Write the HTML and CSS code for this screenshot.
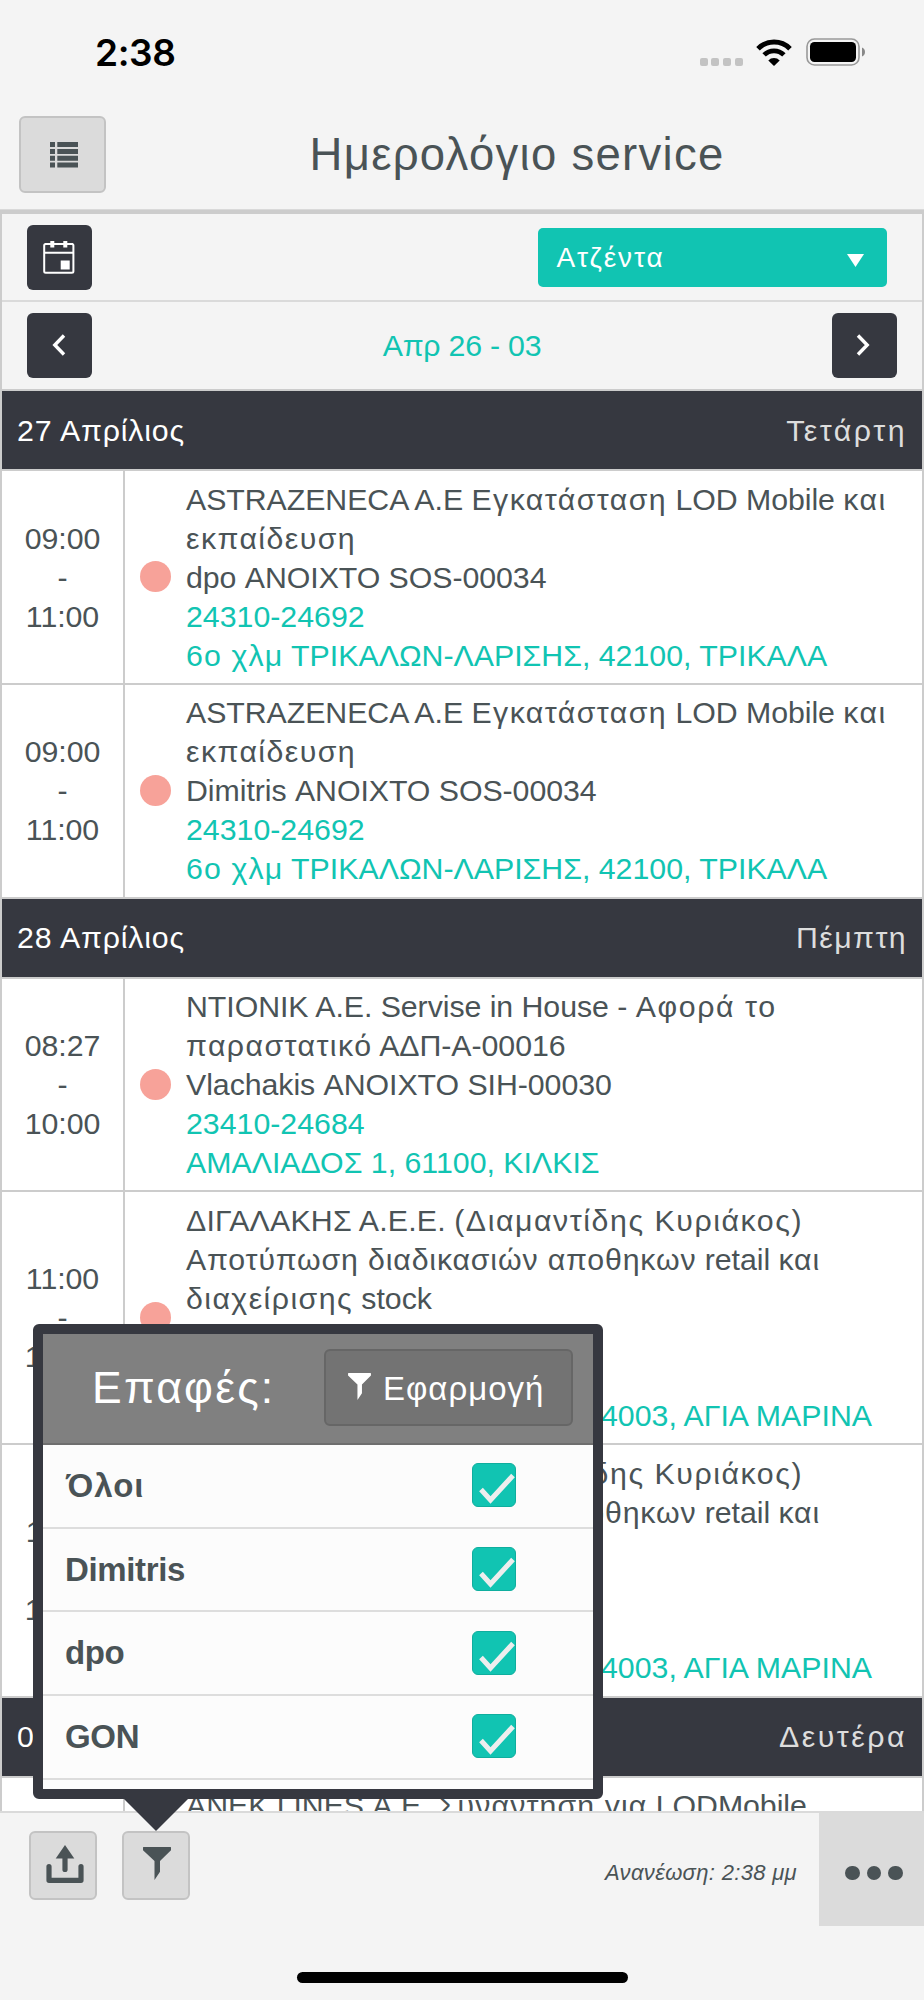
FILE: index.html
```html
<!DOCTYPE html>
<html lang="el">
<head>
<meta charset="utf-8">
<title>Ημερολόγιο service</title>
<link rel="stylesheet" href="styles.css">
</head>
<body>
<div class="app">
  <div class="status">
    <span class="clock">2:38</span>
    <div class="indicators">
      <span class="cell"><i></i><i></i><i></i><i></i></span>
      <svg class="wifi" width="36" height="27" viewBox="0 0 36 27">
        <g fill="none" stroke="#000">
          <path d="M2 9.700a22.600 22.600 0 0 1 32 0" stroke-width="5"/>
          <path d="M8.100 15.900a14 14 0 0 1 19.800 0" stroke-width="4.800"/>
        </g>
        <path d="M18 27l-5.700-5.600a8 8 0 0 1 11.400 0z"/>
      </svg>
      <svg class="battery" width="60" height="28" viewBox="0 0 60 28">
        <rect x="1" y="1" width="52" height="26" rx="7.500" fill="none" stroke="#999" stroke-width="1.600"/>
        <rect x="4" y="4" width="46" height="20" rx="4.500"/>
        <path d="M56 9.500c4 1.500 4 7.500 0 9z" fill="#888"/>
      </svg>
    </div>
  </div>

  <header class="header">
    <button class="btn menu">
      <svg width="28" height="26" viewBox="0 0 28 26" fill="#4a5356">
        <path d="M0 0h5v5H0zM7.300 0H28v5H7.300zM0 7h5v5H0zM7.300 7H28v5H7.300zM0 13.800h5v5H0zM7.300 13.800H28v5H7.300zM0 20.600h5v5H0zM7.300 20.600H28v5H7.300z"/>
      </svg>
    </button>
    <h1 class="title">Ημερολόγιο service</h1>
  </header>

  <main class="calendar">
    <div class="bar">
      <button class="dark">
        <svg width="32" height="34" viewBox="0 0 32 34">
          <rect x="1.200" y="4" width="29.200" height="28.800" rx="1.500" fill="none" stroke="#fff" stroke-width="2"/>
          <path d="M1 12.700h30M2 4h28" stroke="#fff" stroke-width="2"/>
          <path d="M7.300 1h4v6.500h-4zM20.300 1h4v6.500h-4zM17.700 20.500h9v9h-9z" fill="#fff"/>
        </svg>
      </button>
      <div class="select"><span>Ατζέντα</span>
        <svg width="17" height="13" viewBox="0 0 17 13"><path d="M0 0h17L8.500 13z" fill="#fff"/></svg>
      </div>
    </div>
    <div class="bar nav">
      <button class="dark"><svg width="14" height="22" viewBox="0 0 14 22"><path d="M12 1.500L2.800 11l9.200 9.500" fill="none" stroke="#fff" stroke-width="3.400"/></svg></button>
      <span class="range">Απρ 26 - 03</span>
      <button class="dark"><svg width="14" height="22" viewBox="0 0 14 22"><path d="M2 1.500L11.200 11 2 20.500" fill="none" stroke="#fff" stroke-width="3.400"/></svg></button>
    </div>

    <div class="day"><span class="el-tight">27 Απρίλιος</span><span class="weekday">Τετάρτη</span></div>
    <div class="event">
      <div class="time"><span>09:00</span><span>-</span><span>11:00</span></div>
      <div class="mark"><i class="dot"></i></div>
      <div class="info">
        <span>ASTRAZENECA A.E <b class="el">Εγκατάσταση</b> LOD Mobile <b class="el">και</b></span>
        <span class="el">εκπαίδευση</span>
        <span>dpo ΑΝΟΙΧΤΟ SOS-00034</span>
        <a>24310-24692</a>
        <a><b class="el-soft">6ο χλμ</b> ΤΡΙΚΑΛΩΝ-ΛΑΡΙΣΗΣ, 42100, ΤΡΙΚΑΛΑ</a>
      </div>
    </div>
    <div class="event">
      <div class="time"><span>09:00</span><span>-</span><span>11:00</span></div>
      <div class="mark"><i class="dot"></i></div>
      <div class="info">
        <span>ASTRAZENECA A.E <b class="el">Εγκατάσταση</b> LOD Mobile <b class="el">και</b></span>
        <span class="el">εκπαίδευση</span>
        <span>Dimitris ΑΝΟΙΧΤΟ SOS-00034</span>
        <a>24310-24692</a>
        <a><b class="el-soft">6ο χλμ</b> ΤΡΙΚΑΛΩΝ-ΛΑΡΙΣΗΣ, 42100, ΤΡΙΚΑΛΑ</a>
      </div>
    </div>

    <div class="day"><span class="el-tight">28 Απρίλιος</span><span class="weekday thursday">Πέμπτη</span></div>
    <div class="event">
      <div class="time"><span>08:27</span><span>-</span><span>10:00</span></div>
      <div class="mark"><i class="dot"></i></div>
      <div class="info">
        <span>ΝΤΙΟΝΙΚ Α.Ε. Servise in House - <b class="el-wide">Αφορά το</b></span>
        <span><b class="el">παραστατικό</b> ΑΔΠ-Α-00016</span>
        <span>Vlachakis ΑΝΟΙΧΤΟ SIH-00030</span>
        <a>23410-24684</a>
        <a>ΑΜΑΛΙΑΔΟΣ 1, 61100, ΚΙΛΚΙΣ</a>
      </div>
    </div>
    <div class="event">
      <div class="time"><span>11:00</span><span>-</span><span>12:00</span></div>
      <div class="mark"><i class="dot"></i></div>
      <div class="info">
        <span><b class="caps">ΔΙΓΑΛΑΚΗΣ Α.Ε.Ε.</b> <b class="el-mid">(Διαμαντίδης Κυριάκος)</b></span>
        <span><b class="el-tight">Αποτύπωση διαδικασιών αποθηκων</b> retail <b class="el-tight">και</b></span>
        <span><b class="el">διαχείρισης</b> stock</span>
        <span>dpo ΑΝΟΙΧΤΟ</span>
        <a>28210-60000</a>
        <a class="address"><b>ΑΓΙΑ ΜΑΡΙΝΑ ΧΑΝΙΩΝ, 7</b><b>4003, ΑΓΙΑ ΜΑΡΙΝΑ</b></a>
      </div>
    </div>
    <div class="event">
      <div class="time"><span>11:00</span><span>-</span><span>12:00</span></div>
      <div class="mark"><i class="dot"></i></div>
      <div class="info">
        <span><b class="caps">ΔΙΓΑΛΑΚΗΣ Α.Ε.Ε.</b> <b class="el-mid">(Διαμαντίδης Κυριάκος)</b></span>
        <span><b class="el-tight">Αποτύπωση διαδικασιών αποθηκων</b> retail <b class="el-tight">και</b></span>
        <span><b class="el">διαχείρισης</b> stock</span>
        <span>GON ΑΝΟΙΧΤΟ</span>
        <a>28210-60000</a>
        <a class="address"><b>ΑΓΙΑ ΜΑΡΙΝΑ ΧΑΝΙΩΝ, 7</b><b>4003, ΑΓΙΑ ΜΑΡΙΝΑ</b></a>
      </div>
    </div>

    <div class="day"><span class="el-tight">02 Μάιος</span><span class="weekday">Δευτέρα</span></div>
    <div class="event">
      <div class="time"><span>09:00</span><span>-</span><span>11:00</span></div>
      <div class="mark"><i class="dot"></i></div>
      <div class="info">
        <span>ΑΝΕΚ LINES Α.Ε. <b class="el-soft">Συνάντηση για</b> LODMobile</span>
        <span>dpo ΑΝΟΙΧΤΟ</span>
        <a>28210-60000</a>
        <a>ΧΑΝΙΑ</a>
      </div>
    </div>
  </main>

  <footer class="footer">
    <button class="btn tool upload">
      <svg width="40" height="40" viewBox="0 0 40 40">
        <path d="M4 21.500v13.800h32V21.500" fill="none" stroke="#4a5356" stroke-width="5.200" stroke-linecap="round" stroke-linejoin="round"/>
        <path d="M20 11v13.500" stroke="#4a5356" stroke-width="5.200" stroke-linecap="round"/>
        <path d="M20 0l9.300 13.500H10.700z" fill="#4a5356"/>
      </svg>
    </button>
    <button class="btn tool funnel">
      <svg width="28" height="33" viewBox="0 0 28 33"><path d="M.5 0h27q.5 0 .5.500v2.700L17 14v10.800L11.500 33V14L0 3.200V.5Q0 0 .5 0z" fill="#4a5356"/></svg>
    </button>
    <span class="refresh">Ανανέωση: 2:38 μμ</span>
    <div class="more"><i></i><i></i><i></i></div>
  </footer>

  <section class="popup">
    <div class="popup-body">
      <div class="popup-head">
        <h2>Επαφές:</h2>
        <button class="apply">
          <svg width="23" height="27" viewBox="0 0 28 33"><path d="M.5 0h27q.5 0 .5.500v2.700L17 14v10.800L11.500 33V14L0 3.200V.5Q0 0 .5 0z" fill="#fff"/></svg>
          <span>Εφαρμογή</span>
        </button>
      </div>
      <label class="option"><span class="all">Όλοι</span><i class="check"><svg width="36" height="31" viewBox="0 0 36 31"><path d="M2 16.500l9.500 10.500L34 2.500" fill="none" stroke="#eee" stroke-width="5"/></svg></i></label>
      <label class="option"><span>Dimitris</span><i class="check"><svg width="36" height="31" viewBox="0 0 36 31"><path d="M2 16.500l9.500 10.500L34 2.500" fill="none" stroke="#eee" stroke-width="5"/></svg></i></label>
      <label class="option"><span>dpo</span><i class="check"><svg width="36" height="31" viewBox="0 0 36 31"><path d="M2 16.500l9.500 10.500L34 2.500" fill="none" stroke="#eee" stroke-width="5"/></svg></i></label>
      <label class="option"><span>GON</span><i class="check"><svg width="36" height="31" viewBox="0 0 36 31"><path d="M2 16.500l9.500 10.500L34 2.500" fill="none" stroke="#eee" stroke-width="5"/></svg></i></label>
    </div>
    <svg class="arrow" width="66" height="33" viewBox="0 0 66 33"><path d="M0 0h66L33 33z" fill="#363840"/></svg>
  </section>
  <div class="home"></div>
</div>
</body>
</html>
```

FILE: styles.css
```css
* { box-sizing: border-box; }
body { margin: 0; background: #f4f4f4; }
button { margin: 0; padding: 0; font: inherit; }
svg { display: block; flex: none; }
b { font-weight: inherit; }

.app {
  position: relative;
  display: flex;
  flex-direction: column;
  width: 924px;
  height: 2000px;
  overflow: hidden;
  background: #f4f4f4;
  color: #4a5356;
  font-family: "Liberation Sans", Arial, sans-serif;
  font-size: 30.3px;
  line-height: 38.95px;
}

/* status bar */
.status {
  display: flex;
  justify-content: space-between;
  align-items: flex-start;
  height: 100px;
  padding: 38px 58px 0 95px;
  color: #000;
}
.clock { font: 600 37px/30px Inter, sans-serif; letter-spacing: -0.4px; }
.indicators { display: flex; align-items: flex-start; }
.cell { display: flex; gap: 3.600px; padding-top: 20px; margin-right: 13.500px; }
.cell i { width: 8px; height: 8px; border-radius: 2px; background: #c3c3c3; }
.wifi { margin: 1px 14px 0 0; }

/* header */
.header {
  display: flex;
  flex: none;
  align-items: center;
  height: 110px;
  padding: 0 19px;
  border-bottom: 1px solid #d9d9d9;
}
.btn {
  display: flex;
  align-items: center;
  justify-content: center;
  border: 2px solid #c3c3c3;
  border-radius: 6px;
  background: #dbdbdb;
}
.menu { width: 87px; height: 77px; padding: 1px 0 0 3px; }
.title {
  margin: 0 0 0 203.500px;
  padding-top: 1px;
  font-size: 45.500px;
  font-weight: 400;
  letter-spacing: 1.28px;
}

/* calendar */
.calendar {
  flex: none;
  height: 1601px;
  overflow: hidden;
  border: 2px solid #ccc;
  border-width: 4px 2px 0;
}
.bar {
  display: flex;
  align-items: center;
  justify-content: space-between;
  height: 88px;
  padding: 0 35px 0 25px;
  border-bottom: 2px solid #dadada;
}
.nav { height: 89px; padding-right: 25px; border-color: #ccc; }
.dark {
  display: flex;
  align-items: center;
  justify-content: center;
  width: 65px;
  height: 65px;
  border: 0;
  border-radius: 6px;
  background: #363840;
}
.dark svg { margin-top: -1px; margin-left: -2px; }
.select {
  display: flex;
  align-items: center;
  justify-content: space-between;
  width: 349px;
  height: 59px;
  padding: 0 23px 0 18.500px;
  border-radius: 5px;
  background: #11c4b2;
  color: #fff;
  font-size: 28px;
  letter-spacing: 1.86px;
}
.select span { padding-top: 2px; }
.select svg { margin-top: 7px; }
.range { padding-top: 1px; color: #11c4b2; letter-spacing: -0.22px; }

.day {
  display: flex;
  align-items: center;
  justify-content: space-between;
  height: 80px;
  padding: 2px 15px 0;
  border-bottom: 2px solid #ccc;
  background: #363840;
  color: #fff;
}
.weekday { color: #ddd; letter-spacing: 2.5px; }
.day .thursday { letter-spacing: 1.4px; }
.event {
  display: flex;
  border-bottom: 2px solid #ccc;
  background: #fff;
}
.time {
  display: flex;
  flex-direction: column;
  justify-content: center;
  width: 123px;
  padding-top: 2.500px;
  border-right: 2px solid #ccc;
  text-align: center;
}
.mark { display: flex; align-items: center; width: 61px; padding-left: 15px; }
.dot { width: 31px; height: 31px; border-radius: 50%; background: #f7a299; }
.info {
  display: flex;
  flex-direction: column;
  padding: 9.700px 0 7.300px;
  white-space: nowrap;
}
.info a { color: #11c4b2; letter-spacing: 0; }
.info, .time { letter-spacing: -0.05px; }
.caps { letter-spacing: 0.2px; }
.el { letter-spacing: 1.42px; }
.el-soft { letter-spacing: 1.1px; }
.el-tight { letter-spacing: 0.83px; }
.el-mid { letter-spacing: 1.55px; }
.el-wide { letter-spacing: 1.6px; }
.address b:first-child { display: inline-block; width: 415px; }

/* footer */
.footer {
  display: flex;
  flex: none;
  align-items: flex-start;
  height: 189px;
  border-top: 2px solid #dadada;
  padding-left: 29px;
}
.tool { width: 68px; height: 69px; margin: 18px 25px 0 0; }
.upload { padding: 0 0 2px 3px; }
.funnel { padding: 0 0 5px 2px; }
.refresh {
  margin: 45px 22px 0 auto;
  font-size: 22px;
  font-style: italic;
  line-height: 30px;
  letter-spacing: 0.33px;
}
.more {
  display: flex;
  align-items: center;
  justify-content: center;
  gap: 7px;
  width: 105px;
  height: 113px;
  padding: 7px 0 0 5px;
  background: #dbdbdb;
}
.more i { width: 14.500px; height: 14.500px; border-radius: 50%; background: #4a5356; }

/* contact filter, floating over the agenda */
.popup { position: absolute; left: 33px; top: 1324px; width: 570px; }
.popup-body {
  height: 475px;
  overflow: hidden;
  border: 10.500px solid #363840;
  border-radius: 6px;
  background: #fcfcfc;
}
.popup-head {
  display: flex;
  align-items: center;
  justify-content: space-between;
  height: 111px;
  padding: 0 19px 1px 49px;
  border-bottom: 2px solid #6e6e6e;
  background: #808080;
  color: #fff;
}
.popup-head h2 { margin: 0; font-size: 44.500px; font-weight: 400; letter-spacing: 2.2px; }
.apply {
  display: flex;
  align-items: center;
  gap: 12px;
  width: 249px;
  height: 77px;
  margin: -1px 1px 0 0;
  padding-left: 22px;
  border: 2px solid #666;
  border-radius: 6px;
  background: #737373;
  color: #fff;
  font-size: 33px;
  letter-spacing: 0.98px;
}
.apply span { padding-top: 4px; }
.apply svg { margin-top: -3px; }
.option {
  display: flex;
  align-items: center;
  justify-content: space-between;
  height: 83.700px;
  padding: 1px 77px 0 22px;
  border-bottom: 2px solid #ddd;
  font-size: 33px;
  font-weight: bold;
  letter-spacing: -0.35px;
}
.option .all { padding-left: 1px; letter-spacing: 1px; }
.check {
  display: flex;
  align-items: flex-end;
  justify-content: flex-end;
  width: 44px;
  height: 44px;
  margin-top: -2px;
  border: 1.500px solid #0fae9e;
  border-radius: 6px;
  background: #11c4b2;
  padding-bottom: 2px;
}
.arrow { position: absolute; left: 89.500px; top: 474px; }

.home {
  position: absolute;
  left: 297px;
  top: 1972px;
  width: 331px;
  height: 11px;
  border-radius: 6px;
  background: #000;
}
```
